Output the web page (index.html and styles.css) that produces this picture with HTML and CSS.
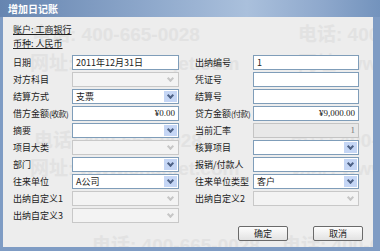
FILE: index.html
```html
<!DOCTYPE html>
<html lang="zh-CN">

<head>
    <meta charset="UTF-8">
    <title>增加日记账</title>
    <link rel="stylesheet" href="styles.css">
</head>

<body>
    <div class="dialog">
        <div class="titlebar">增加日记账</div>
        <div class="content">
            <!-- 水印 -->
            <div class="watermark">
                <span class="wm" style="left: 32px; top: 19px;">电话: 400-665-0028</span>
                <span class="wm" style="left: 298px; top: 19px;">电话: 400-665-0028</span>
                <span class="wm" style="left: 30px; top: 48px;">网址: www.chanjet.com</span>
                <span class="wm" style="left: 298px; top: 48px;">网址: www.chanjet.com</span>
                <span class="wm" style="left: 34px; top: 125px;">电话: 400-665-0028</span>
                <span class="wm" style="left: 290px; top: 125px;">电话: 400-665-0028</span>
                <span class="wm" style="left: 30px; top: 153px;">网址: www.chanjet.com</span>
                <span class="wm" style="left: 292px; top: 153px;">网址: www.chanjet.com</span>
                <span class="wm" style="left: 92px; top: 230px;">电话: 400-665-0028</span>
                <span class="wm" style="left: 282px; top: 230px;">电话: 400-665-0028</span>
            </div>

            <div class="info">
                <span>账户: 工商银行</span>
                <span>币种: 人民币</span>
            </div>

            <div class="form">
                <label>日期</label>
                <div class="field">2011年12月31日</div>
                <label class="right">出纳编号</label>
                <div class="field">1</div>

                <label>对方科目</label>
                <div class="combo disabled"><span></span><i></i></div>
                <label class="right">凭证号</label>
                <div class="field"></div>

                <label>结算方式</label>
                <div class="combo"><span>支票</span><i></i></div>
                <label class="right">结算号</label>
                <div class="field"></div>

                <label>借方金额<small>(收款)</small></label>
                <div class="field num">¥0.00</div>
                <label class="right">贷方金额<small>(付款)</small></label>
                <div class="field num">¥9,000.00</div>

                <label>摘要</label>
                <div class="combo"><span></span><i></i></div>
                <label class="right">当前汇率</label>
                <div class="field num disabled">1</div>

                <label>项目大类</label>
                <div class="combo disabled"><span></span><i></i></div>
                <label class="right">核算项目</label>
                <div class="combo"><span></span><i></i></div>

                <label>部门</label>
                <div class="combo"><span></span><i></i></div>
                <label class="right">报销/付款人</label>
                <div class="combo"><span></span><i></i></div>

                <label>往来单位</label>
                <div class="combo"><span>A公司</span><i></i></div>
                <label class="right">往来单位类型</label>
                <div class="combo"><span>客户</span><i></i></div>

                <label>出纳自定义1</label>
                <div class="combo disabled"><span></span><i></i></div>
                <label class="right">出纳自定义2</label>
                <div class="combo disabled"><span></span><i></i></div>

                <label>出纳自定义3</label>
                <div class="combo disabled"><span></span><i></i></div>
            </div>

            <div class="actions">
                <button>确定</button>
                <button>取消</button>
            </div>
        </div>
    </div>
</body>

</html>
```

FILE: styles.css
```css
body {
    margin: 0;
    font-family: "Noto Sans CJK SC", "DejaVu Sans", sans-serif;
    font-size: 9px;
    color: #222;
}

.dialog {
    width: 380px;
    height: 251px;
    display: flex;
    flex-direction: column;
    background: #7f9cc4;
    overflow: hidden;
}

.titlebar {
    height: 17px;
    line-height: 17px;
    padding-left: 8px;
    color: #fff;
    font-weight: bold;
    font-size: 10px;
    background: linear-gradient(to right, #6685b0 0%, #8fa9cc 40%, #aac0dc 65%, #8ea8cc 85%, #7393bd 100%);
}

.content {
    position: relative;
    flex: 1;
    margin: 0 7px 4px 3px;
    background: #ededed;
    padding: 6px 0 0 10px;
}

/* 水印 */
.watermark {
    position: absolute;
    inset: -17px 0 0 -3px;
    pointer-events: none;
    overflow: hidden;
}

.wm {
    position: absolute;
    white-space: nowrap;
    font-family: "Liberation Sans", "Noto Sans CJK SC", sans-serif;
    font-size: 19px;
    font-weight: bold;
    color: #e2e2e2;
}

.info {
    position: relative;
    display: flex;
    flex-direction: column;
    line-height: 14px;
}

.info span {
    text-decoration: underline;
    height: 14px;
}

.form {
    position: relative;
    display: grid;
    grid-template-columns: 59px 107px 74px 106px;
    row-gap: 2px;
    margin-top: 4px;
}

.form label {
    height: 15px;
    line-height: 15px;
    white-space: nowrap;
}

.form label small {
    font-size: 8px;
    letter-spacing: -0.6px;
}

.form label.right {
    padding-left: 16px;
}

.field,
.combo {
    height: 15px;
    box-sizing: border-box;
    border: 1px solid #7f9db9;
    background: #fff;
    line-height: 13px;
    padding: 0 3px;
    white-space: nowrap;
    overflow: hidden;
}

.num {
    text-align: right;
    font-family: "Liberation Serif", serif;
}

.field.disabled {
    background: #e8e8e8;
    border-color: #c4c4c4;
    color: #777;
}

.combo {
    display: flex;
    justify-content: space-between;
    padding-right: 1px;
}

.combo i {
    width: 13px;
    height: 11px;
    margin-top: 1px;
    background: #c5d6f5;
    position: relative;
}

.combo i::after {
    content: "";
    position: absolute;
    left: 4px;
    top: 2px;
    width: 3px;
    height: 3px;
    border-right: 2px solid #4d6185;
    border-bottom: 2px solid #4d6185;
    transform: rotate(45deg);
}

.combo.disabled {
    background: #f3f3f3;
    border-color: #c8c8c8;
}

.combo.disabled i {
    background: #f3f3f3;
}

.combo.disabled i::after {
    border-color: #c6c6c6;
}

.actions {
    position: relative;
    display: flex;
    justify-content: flex-end;
    gap: 25px;
    padding-right: 10px;
    margin-top: 3px;
}

.actions button {
    width: 50px;
    height: 15px;
    padding: 0;
    font-family: inherit;
    font-size: 9px;
    line-height: 13px;
    color: #222;
    border: 1px solid #6a6a6a;
    border-radius: 2px;
    background: linear-gradient(#fdfdfd, #e2e2e2);
}
```
